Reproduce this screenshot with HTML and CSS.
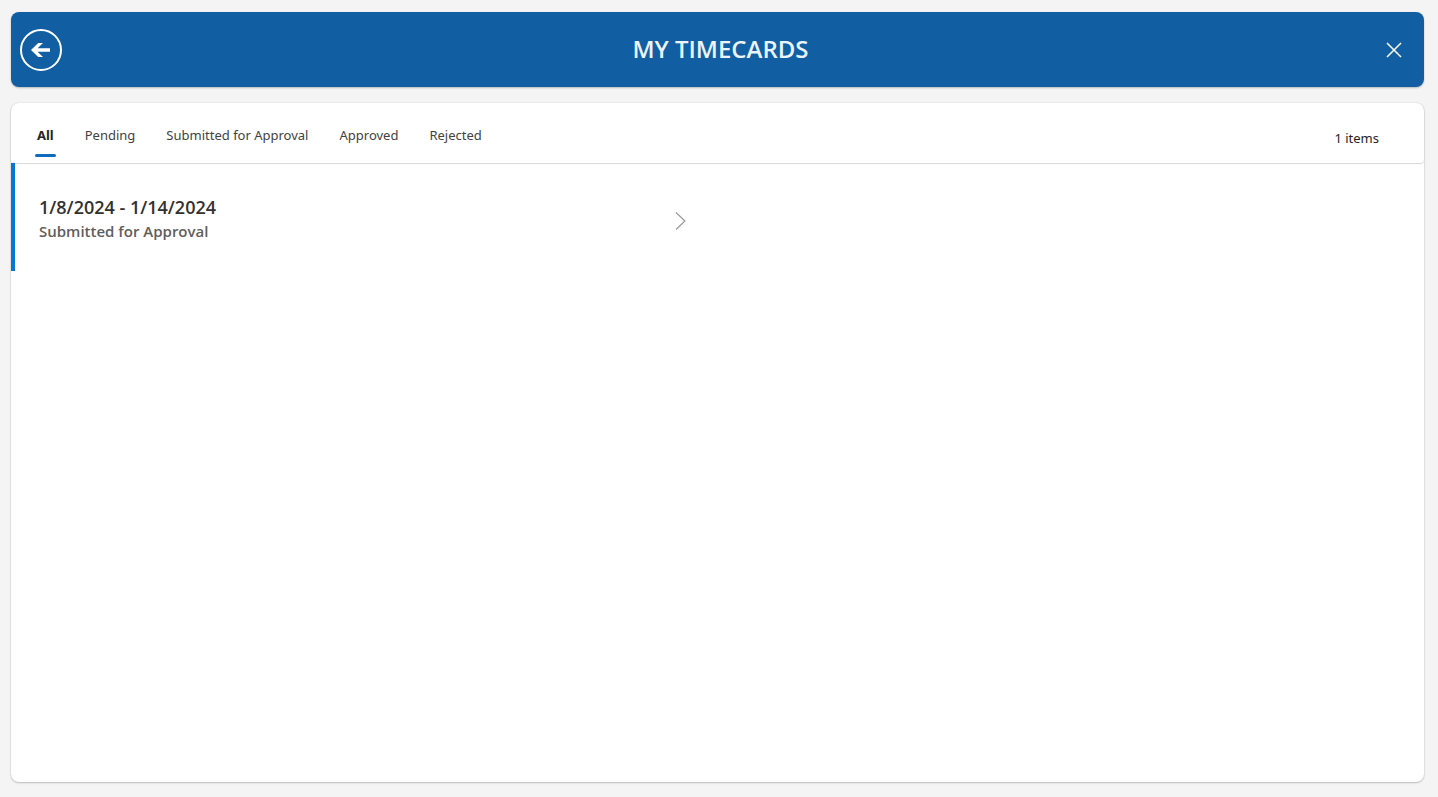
FILE: index.html
```html
<!DOCTYPE html>
<html lang="en">
<head>
<meta charset="utf-8">
<meta name="viewport" content="width=device-width, initial-scale=1">
<title>My Timecards</title>
<link rel="stylesheet" href="styles.css">
</head>
<body class="app">
  <header class="header">
    <button class="back" type="button" aria-label="Back">
      <svg width="20" height="16" viewBox="0 0 20 16" aria-hidden="true"><path d="M0 8 7.200 1H12L6.600 6.300H19V9.700H6.600L12 15H7.200Z" fill="currentColor"/></svg>
    </button>
    <h1 class="title">MY TIMECARDS</h1>
    <button class="close" type="button" aria-label="Close">
      <svg width="16" height="16" viewBox="0 0 16 16" aria-hidden="true"><path d="M1 1 15 15M15 1 1 15" fill="none" stroke="currentColor" stroke-width="1.500"/></svg>
    </button>
  </header>
  <main class="card">
    <div class="toolbar">
      <nav class="tabs" aria-label="Timecard status">
        <button class="tab tab-active" type="button" aria-current="true">All</button>
        <button class="tab" type="button">Pending</button>
        <button class="tab" type="button">Submitted for Approval</button>
        <button class="tab" type="button">Approved</button>
        <button class="tab" type="button">Rejected</button>
      </nav>
      <p class="count">1 items</p>
    </div>
    <div class="list">
      <a class="item" href="#timecard">
        <span class="item-text">
          <span class="item-range">1/8/2024 - 1/14/2024</span>
          <span class="item-status">Submitted for Approval</span>
        </span>
        <svg class="chevron" width="12" height="20" viewBox="0 0 12 20" aria-hidden="true"><path d="M1 2.500 10 11 1 19.500" fill="none" stroke="currentColor" stroke-width="1.100"/></svg>
      </a>
    </div>
  </main>
</body>
</html>
```
FILE: styles.css
```css
* {
  box-sizing: border-box;
}

.app {
  display: flex;
  flex-direction: column;
  gap: 16px;
  min-height: 100vh;
  margin: 0;
  padding: 12px 14px 15px 11px;
  background: #f4f4f4;
  color: #242424;
  font-family: "Noto Sans", "Open Sans", sans-serif;
}

button {
  padding: 0;
  border: 0;
  background: none;
  color: inherit;
  font: inherit;
  cursor: pointer;
}

.header {
  display: grid;
  grid-template-columns: 48px 1fr 42px;
  align-items: center;
  padding: 16px 9px;
  border-radius: 8px;
  background: #115ea3;
  color: #fff;
  box-shadow: 0 1px 2px rgba(0, 0, 0, 0.24);
}

.back {
  display: grid;
  place-items: center;
  width: 42px;
  height: 42px;
  border: 2px solid #fff;
  border-radius: 50%;
}

.title {
  margin: 0;
  padding-bottom: 1px;
  color: #ebf3fc;
  font-family: "Open Sans", sans-serif;
  font-size: 24px;
  line-height: 40px;
  font-weight: 600;
  text-align: center;
}

.close {
  display: grid;
  place-items: center;
  width: 42px;
  height: 43px;
}

.card {
  flex: 1;
  border-radius: 8px;
  background: #fff;
  box-shadow: 0 0 2px rgba(0, 0, 0, 0.12), 0 1px 2px rgba(0, 0, 0, 0.2);
}

.toolbar {
  display: flex;
  justify-content: space-between;
  padding: 16px 45px 6px 24px;
  border-radius: 8px 8px 4px 4px;
  box-shadow: 0 1px 1px rgba(0, 0, 0, 0.16);
}

.tabs {
  display: flex;
  gap: 27px;
}

.tab {
  display: flex;
  flex-direction: column;
  padding: 6px 2px 0;
  color: #424242;
  font-size: 13px;
  line-height: 20px;
}

.tab-active {
  color: #242424;
  font-weight: 700;
}

.tab::after {
  content: "";
  align-self: stretch;
  height: 3px;
  margin: 9px -2px 0;
  border-radius: 2px;
}

.tab-active::after {
  background: #0f6cbd;
}

.count {
  margin: 0;
  padding-top: 9px;
  font-size: 13px;
  line-height: 20px;
}

.list {
  display: grid;
  grid-template-columns: 1fr 1fr;
}

.item {
  display: flex;
  align-items: center;
  justify-content: space-between;
  padding: 32px 31px 27px 24px;
  border-left: 4px solid #0078d4;
  font-family: "Open Sans", sans-serif;
  text-decoration: none;
}

.item-text {
  display: flex;
  flex-direction: column;
}

.item-range {
  color: #323130;
  font-size: 18px;
  line-height: 24px;
  font-weight: 600;
}

.item-status {
  color: #605e5c;
  font-size: 15px;
  line-height: 25px;
  font-weight: 600;
}

.chevron {
  color: #979593;
}
```
